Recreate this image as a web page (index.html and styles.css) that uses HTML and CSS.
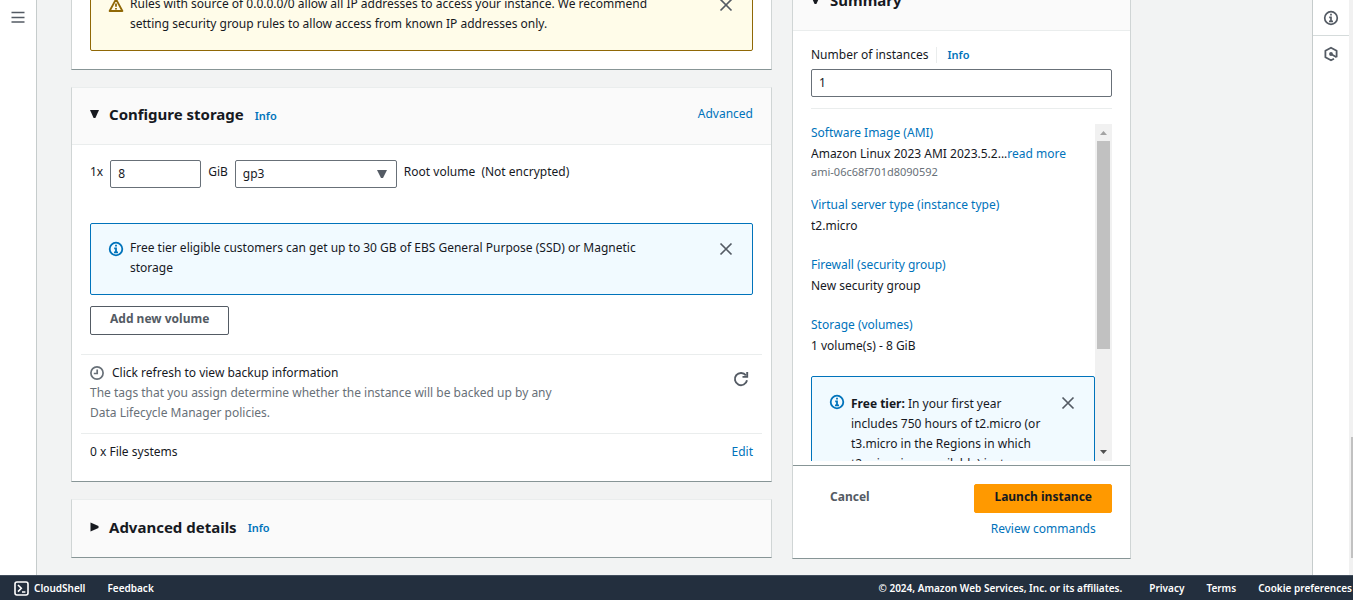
FILE: index.html
```
<!DOCTYPE html>
<html lang="en">
<head>
  <meta charset="UTF-8" />
  <meta name="viewport" content="width=device-width, initial-scale=1.0" />
  <title>Launch an instance | EC2</title>
  <link rel="stylesheet" href="styles.css">
</head>
<body>
  <div class="shell">
    <nav class="side-nav">
      <button class="icon-button" aria-label="Open navigation">
        <svg width="14" height="12" viewBox="0 0 14 12"><path d="M0.5 1.5h13M0.5 6.5h13M0.5 11h13" stroke="#545b64" stroke-width="1.6"/></svg>
      </button>
    </nav>

    <main class="content">
      <div class="columns">
        <div class="column">

          <!-- security groups -->
          <section class="card">
            <div class="card-body">
              <div class="alert warning">
                <svg class="alert-icon" width="16" height="16" viewBox="0 0 16 16" fill="none" stroke="#906806" stroke-width="1.8"><path d="M8 2.2 14.4 14H1.6Z" stroke-linejoin="round"/><path d="M8 6.5v3.3M8 10.9v1.6"/></svg>
                <p>Rules with source of 0.0.0.0/0 allow all IP addresses to access your instance. We recommend setting security group rules to allow access from known IP addresses only.</p>
                <button class="icon-button close" aria-label="Close warning">
                  <svg width="14" height="14" viewBox="0 0 14 14"><path d="M1.5 1.5l11 11M12.5 1.5l-11 11" stroke="#545b64" stroke-width="1.7"/></svg>
                </button>
              </div>
            </div>
          </section>

          <!-- storage -->
          <section class="card">
            <div class="card-header">
              <svg class="caret" width="10" height="10" viewBox="0 0 10 10"><path d="M0 1h9L5.4 9H3.6Z" fill="#16191f"/></svg>
              <h2>Configure storage</h2>
              <a href="#" class="info">Info</a>
              <a href="#" class="header-action">Advanced</a>
            </div>
            <div class="card-body">
              <div class="volume-row">
                <label for="size">1x</label>
                <input class="size" id="size" value="8">
                <label for="volume_type">GiB</label>
                <div class="select-wrap">
                  <select id="volume_type"><option>gp3</option></select>
                  <svg width="10" height="8" viewBox="0 0 10 8"><path d="M0 0h10L6 8H4Z" fill="#545b64"/></svg>
                </div>
                <span>Root volume&nbsp; (Not encrypted)</span>
              </div>

              <div class="alert">
                <svg class="alert-icon" width="16" height="16" viewBox="0 0 16 16" fill="none" stroke="#0073bb" stroke-width="1.8"><circle cx="8" cy="8" r="6.3"/><path d="M8 3.8v1.8M6.2 7.3H8v3.9M6 11.3h4"/></svg>
                <p>Free tier eligible customers can get up to 30 GB of EBS General Purpose (SSD) or Magnetic storage</p>
                <button class="icon-button close" aria-label="Close message">
                  <svg width="14" height="14" viewBox="0 0 14 14"><path d="M1.5 1.5l11 11M12.5 1.5l-11 11" stroke="#545b64" stroke-width="1.7"/></svg>
                </button>
              </div>

              <button class="btn">Add new volume</button>

              <div class="backup">
                <div class="backup-text">
                  <p class="backup-title">
                    <svg width="14" height="14" viewBox="0 0 14 14" fill="none" stroke="#687078" stroke-width="1.7"><circle cx="7" cy="7" r="6.1"/><path d="M7.2 3.5v4H3.8"/></svg>
                    Click refresh to view backup information
                  </p>
                  <p class="muted">The tags that you assign determine whether the instance will be backed up by any Data Lifecycle Manager policies.</p>
                </div>
                <button class="icon-button" aria-label="Refresh">
                  <svg width="16" height="16" viewBox="0 0 16 16" fill="none" stroke="#545b64" stroke-width="1.9"><path d="M14 9.2A6.1 6.1 0 1 1 12.9 4.4"/><path d="M14.2 1v4.9H9.5"/></svg>
                </button>
              </div>

              <div class="file-systems">
                <span>0 x File systems</span>
                <a href="#">Edit</a>
              </div>
            </div>
          </section>

          <!-- advanced details -->
          <section class="card">
            <div class="card-header collapsed">
              <svg class="caret" width="10" height="10" viewBox="0 0 10 10"><path d="M0.5 0.5v9L8.5 6V4Z" fill="#16191f"/></svg>
              <h2>Advanced details</h2>
              <a href="#" class="info">Info</a>
            </div>
          </section>
        </div>

        <!-- summary -->
        <aside class="column summary">
          <section class="card">
            <div class="card-header">
              <svg class="caret" width="10" height="10" viewBox="0 0 10 10"><path d="M0 1h9L5.4 9H3.6Z" fill="#16191f"/></svg>
              <h2>Summary</h2>
            </div>
            <div class="summary-body">
              <div class="count-label">
                <label for="instances">Number of instances</label>
                <a href="#" class="info">Info</a>
              </div>
              <input id="instances" value="1">
              <div class="summary-scroll">
                <div class="summary-list">
                  <div class="summary-item">
                    <a href="#">Software Image (AMI)</a>
                    <p>Amazon Linux 2023 AMI 2023.5.2...<a href="#">read more</a></p>
                    <small>ami-06c68f701d8090592</small>
                  </div>
                  <div class="summary-item">
                    <a href="#">Virtual server type (instance type)</a>
                    <p>t2.micro</p>
                  </div>
                  <div class="summary-item">
                    <a href="#">Firewall (security group)</a>
                    <p>New security group</p>
                  </div>
                  <div class="summary-item">
                    <a href="#">Storage (volumes)</a>
                    <p>1 volume(s) - 8 GiB</p>
                  </div>
                  <div class="alert">
                    <svg class="alert-icon" width="16" height="16" viewBox="0 0 16 16" fill="none" stroke="#0073bb" stroke-width="1.8"><circle cx="8" cy="8" r="6.3"/><path d="M8 3.8v1.8M6.2 7.3H8v3.9M6 11.3h4"/></svg>
                    <p><b>Free tier:</b> In your first year includes 750 hours of t2.micro (or t3.micro in the Regions in which t2.micro is unavailable) instance usage</p>
                    <button class="icon-button close" aria-label="Close message">
                      <svg width="14" height="14" viewBox="0 0 14 14"><path d="M1.5 1.5l11 11M12.5 1.5l-11 11" stroke="#545b64" stroke-width="1.7"/></svg>
                    </button>
                  </div>
                </div>
                <div class="scrollbar">
                  <svg width="17" height="17" viewBox="0 0 17 17"><path d="M5 11h7L8.5 7Z" fill="#a3a3a3"/></svg>
                  <div class="thumb"></div>
                  <svg width="17" height="17" viewBox="0 0 17 17"><path d="M5 6h7L8.5 10Z" fill="#505050"/></svg>
                </div>
              </div>
            </div>
            <div class="summary-actions">
              <button class="cancel">Cancel</button>
              <div class="launch">
                <button class="btn primary">Launch instance</button>
                <a href="#">Review commands</a>
              </div>
            </div>
          </section>
        </aside>
      </div>
    </main>

    <div class="tools">
      <button class="icon-button" aria-label="Info panel">
        <svg width="16" height="16" viewBox="0 0 16 16" fill="none" stroke="#545b64" stroke-width="1.7"><circle cx="8" cy="8" r="6.3"/><path d="M8 3.8v1.8M6.2 7.3H8v3.9M6 11.3h4"/></svg>
      </button>
      <button class="icon-button" aria-label="Tutorials">
        <svg width="16" height="16" viewBox="0 0 16 16" fill="none" stroke="#545b64" stroke-width="1.8"><path d="M13.6 11.2V4.8L8 1.7 2.4 4.8v6.4L8 14.3l3-1.6" stroke-linejoin="round"/><circle cx="8" cy="8" r="1" fill="#545b64"/><path d="M8 8l5.5 3.2"/></svg>
      </button>
    </div>
    <div class="page-scroll"><div class="page-thumb"></div></div>
  </div>

  <footer class="footer">
    <a href="#" class="cloudshell">
      <svg width="15" height="15" viewBox="0 0 15 15" fill="none" stroke="#fff" stroke-width="1.6"><rect x="1" y="1" width="13" height="13" rx="2"/><path d="M4 4l3.3 3.3L4 10.6M8 11h3.4"/></svg>
      CloudShell
    </a>
    <a href="#">Feedback</a>
    <span class="copyright">© 2024, Amazon Web Services, Inc. or its affiliates.</span>
    <a href="#">Privacy</a>
    <a href="#">Terms</a>
    <a href="#">Cookie preferences</a>
  </footer>
</body>
</html>
```
FILE: styles.css
```
* {
  box-sizing: border-box;
}

body {
  margin: 0;
  height: 100vh;
  display: flex;
  flex-direction: column;
  overflow: hidden;
  background-color: #f2f3f3;
  color: #16191f;
  font-family: "Noto Sans", sans-serif;
  font-size: 12px;
  line-height: 20px;
}

p, h2 {
  margin: 0;
}

a {
  color: #0073bb;
  text-decoration: none;
}

button, input, select {
  font-family: inherit;
  font-size: inherit;
  color: inherit;
}

svg {
  display: block;
  flex-shrink: 0;
}

.shell {
  flex: 1;
  min-height: 0;
  display: flex;
}

.side-nav {
  width: 37px;
  padding-top: 8px;
  background-color: #fff;
  border-right: 1px solid #c6cccc;
}

.icon-button {
  display: flex;
  align-items: center;
  justify-content: center;
  padding: 0;
  border: none;
  background: none;
  cursor: pointer;
}

.side-nav .icon-button {
  width: 36px;
  height: 18px;
}

.content {
  flex: 1;
  min-width: 0;
  padding: 0 34px;
  display: flex;
  overflow: hidden;
}

/* both columns sit at the end of the scrolled page */
.columns {
  flex: 1;
  max-width: 1060px;
  display: grid;
  grid-template-columns: minmax(0, 1fr) 339px;
  gap: 20px;
}

.column {
  display: flex;
  flex-direction: column;
  justify-content: flex-end;
  gap: 17px;
  padding-bottom: 17px;
  min-height: 0;
}

.column.summary {
  padding-bottom: 16px;
}

.card {
  flex-shrink: 0;
  background-color: #fff;
  border: 1px solid #d0d5d5;
  border-top-color: #eaeded;
  border-bottom-color: #879596;
}

.card-header {
  display: flex;
  align-items: center;
  height: 57px;
  padding: 0 18px 4px;
  background-color: #fafafa;
  border-bottom: 1px solid #eaeded;
}

.card-header.collapsed {
  border-bottom: none;
}

.caret {
  margin-right: 9px;
}

h2 {
  font-size: 15px;
  line-height: 22px;
  font-weight: 700;
}

.info {
  font-size: 11px;
  font-weight: 600;
}

h2 + .info {
  margin: 3px 0 0 11px;
}

.header-action {
  margin-left: auto;
}

.card-body {
  padding: 15px 18px 18px;
}

input, select {
  height: 28px;
  padding: 0 7px 1px;
  border: 1px solid #687078;
  border-radius: 2px;
  background-color: #fff;
}

.volume-row {
  display: flex;
  align-items: center;
  gap: 7px;
  margin-bottom: 35px;
}

.volume-row label,
.volume-row span {
  padding-bottom: 4px;
}

.size {
  width: 91px;
}

.select-wrap {
  position: relative;
  width: 162px;
}

.select-wrap select {
  width: 100%;
  appearance: none;
}

.select-wrap svg {
  position: absolute;
  right: 10px;
  top: 10px;
  pointer-events: none;
}

.alert {
  display: flex;
  align-items: flex-start;
  min-height: 72px;
  padding: 14px 19px 16px 17px;
  border: 1px solid #0073bb;
  border-radius: 2px;
  background-color: #f1faff;
}

.alert.warning {
  border-color: #906806;
  background-color: #fffce9;
}

.alert-icon {
  margin: 3px 6px 0 0;
}

.alert p {
  flex: 1;
  padding-right: 50px;
}

.close {
  height: 22px;
}

.btn {
  height: 29px;
  padding: 0 19px 4px;
  border: 1px solid #545b64;
  border-radius: 2px;
  background-color: #fff;
  color: #545b64;
  font-weight: 700;
  cursor: pointer;
}

.card-body .btn {
  margin: 11px 0 19px;
}

.backup {
  display: flex;
  justify-content: space-between;
  margin: 0 -9px;
  padding: 8px 13px 10px 9px;
  border-top: 1px solid #eaeded;
  border-bottom: 1px solid #eaeded;
}

.backup .icon-button {
  height: 32px;
}

.backup-text {
  max-width: 480px;
}

.backup-title {
  display: flex;
  align-items: center;
  gap: 8px;
}

.muted {
  color: #687078;
}

.file-systems {
  display: flex;
  justify-content: space-between;
  padding: 8px 0 1px;
}

/* summary */
.summary-body {
  display: flex;
  flex-direction: column;
  padding: 14px 18px 4px;
}

.count-label {
  display: flex;
  align-items: center;
  margin-bottom: 4px;
}

.count-label .info {
  margin-left: 7px;
  padding-left: 11px;
  line-height: 16px;
  border-left: 1px solid #eaeded;
}

.summary-scroll {
  display: flex;
  height: 353px;
  margin-top: 11px;
  padding-top: 15px;
  border-top: 1px solid #eaeded;
}

.summary-list {
  flex: 1;
  display: flex;
  flex-direction: column;
  gap: 18px;
  overflow: hidden;
}

.summary-item > a {
  display: block;
  line-height: 18px;
}

.summary-item p {
  line-height: 24px;
}

.summary-item small {
  display: block;
  font-size: 11px;
  line-height: 12px;
  color: #687078;
}

.summary-list .alert {
  flex-shrink: 0;
  padding-top: 17px;
}

.summary-list .alert-icon {
  margin-top: 0;
}

.summary-list .alert p {
  padding-right: 14px;
}

.summary-list .close {
  height: 18px;
}

.scrollbar {
  width: 17px;
  display: flex;
  flex-direction: column;
  justify-content: space-between;
  background-color: #f1f1f1;
}

.thumb {
  width: 13px;
  height: 208px;
  margin: 0 auto auto;
  background-color: #c1c1c1;
}

.summary-actions {
  display: flex;
  justify-content: space-between;
  align-items: flex-start;
  height: 93px;
  padding: 18px;
  border-top: 1px solid #879596;
}

.cancel {
  height: 29px;
  padding: 0 19px 4px;
  border: none;
  background: none;
  color: #545b64;
  font-weight: 700;
}

.launch {
  display: flex;
  flex-direction: column;
  align-items: center;
  gap: 6px;
}

.btn.primary {
  border-color: #ff9900;
  background-color: #ff9900;
  color: #16191f;
}

.tools {
  width: 37px;
  background-color: #fff;
  border-left: 1px solid #c6cccc;
}

.tools .icon-button {
  width: 100%;
  height: 36px;
}

.tools .icon-button:first-child {
  border-bottom: 1px solid #d5dbdb;
}

.page-scroll {
  width: 4px;
  padding: 437px 0 0 2px;
  background-color: #f1f1f1;
}

.page-thumb {
  height: 121px;
  background-color: #c1c1c1;
}

.footer {
  display: flex;
  align-items: center;
  gap: 22px;
  height: 25px;
  padding: 0 1px 0 14px;
  border-top: 1px solid #414d5c;
  background-color: #232f3e;
  color: #fff;
  font-size: 10px;
  font-weight: 600;
  white-space: nowrap;
}

.footer a {
  color: #fff;
}

.cloudshell {
  display: flex;
  align-items: center;
  gap: 5px;
}

.copyright {
  margin-left: auto;
  padding-right: 5px;
}
```
